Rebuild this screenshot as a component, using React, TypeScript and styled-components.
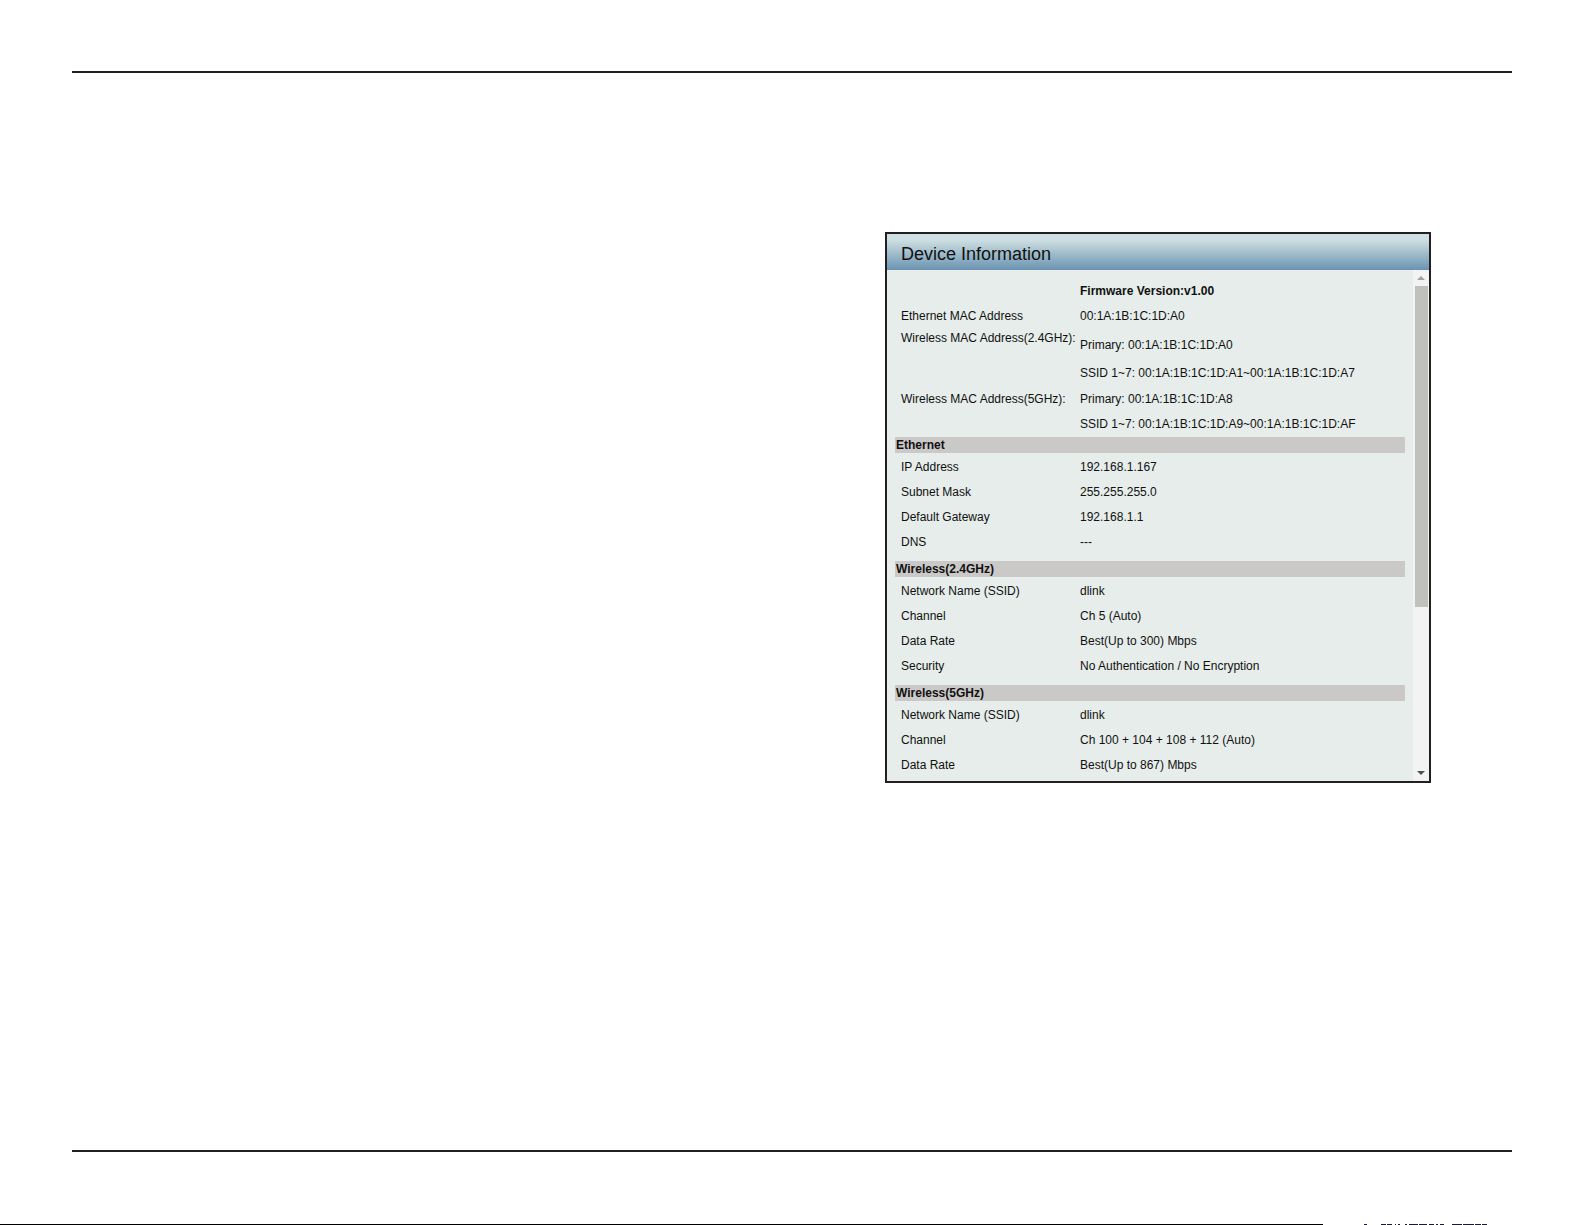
import React from "react";
import styled, { createGlobalStyle } from "styled-components";

const ink = "#231f20";

const GlobalStyle = createGlobalStyle`
  *, *::before, *::after { box-sizing: border-box; }
  body {
    margin: 0;
    background: #fff;
    color: #111;
    font-family: "Liberation Sans", Arial, Helvetica, sans-serif;
    font-size: 12px;
  }
`;

const Page = styled.div`
  min-height: 100vh;
  display: flex;
  flex-direction: column;
  padding-top: 71px;
`;

const Content = styled.main`
  flex: 1;
  margin: 0 73px 72px 72px;
  padding: 159px 81px 24px;
  border-top: 2px solid ${ink};
  border-bottom: 2px solid ${ink};
`;

const Panel = styled.article`
  width: 100%;
  max-width: 546px;
  margin-left: auto;
  border: 2px solid ${ink};
  background: #e6edea;
`;

const PanelTitle = styled.h1`
  margin: 0;
  padding: 4px 14px 0;
  font-size: 18px;
  line-height: 32px;
  font-weight: 400;
  background: linear-gradient(#cfe0e2 15%, #6a93b1);
`;

const PanelBody = styled.div`
  display: flex;
`;

const Details = styled.div`
  flex: 1;
  min-width: 0;
  padding: 9px 8px 3px;
`;

const Section = styled.section`
  & + & {
    margin-top: 6px;
  }
`;

const SectionTitle = styled.h2`
  margin: 0 0 2px;
  padding: 0 1px;
  font-size: 12px;
  line-height: 16px;
  font-weight: 700;
  background: #cbc9c7;
`;

const InfoTable = styled.table`
  width: 100%;
  table-layout: fixed;
  border-collapse: collapse;
`;

const LabelColumn = styled.col`
  width: 185px;
`;

const Label = styled.th<{ $top?: boolean }>`
  padding: ${(p) => (p.$top ? "2px 0 0 6px" : "0 0 0 6px")};
  vertical-align: top;
  text-align: left;
  font-weight: 400;
  line-height: ${(p) => (p.$top ? "14px" : "25px")};
  white-space: nowrap;
`;

const Value = styled.td<{ $loose?: boolean; $strong?: boolean }>`
  padding: ${(p) => (p.$loose ? "2px 0 0" : "0")};
  line-height: ${(p) => (p.$loose ? "28px" : "25px")};
  font-weight: ${(p) => (p.$strong ? 700 : 400)};
`;

const Line = styled.div``;

const ScrollBar = styled.div`
  width: 16px;
  display: flex;
  flex-direction: column;
  background: #f3f3f3;
`;

const ScrollButton = styled.button<{ $dim?: boolean }>`
  height: 16px;
  padding: 0;
  border: 0;
  display: grid;
  place-items: center;
  background: transparent;
  color: ${(p) => (p.$dim ? "#a0a0a0" : "#505050")};
`;

const Track = styled.div`
  flex: 1;
  padding: 0 1px 0 2px;
`;

const Thumb = styled.div`
  height: 67%;
  background: #c0c1bd;
`;

const FootStrip = styled.footer`
  display: flex;
  height: 1px;
`;

const FootRule = styled.div`
  flex: 1;
  background: #000;
`;

const FootMarks = styled.svg`
  display: block;
  flex: none;
`;

type Row = { label: string; values: string[]; loose?: boolean; strong?: boolean };

const device: Row[] = [
  { label: "", values: ["Firmware Version:v1.00"], strong: true },
  { label: "Ethernet MAC Address", values: ["00:1A:1B:1C:1D:A0"] },
  {
    label: "Wireless MAC Address(2.4GHz):",
    values: ["Primary: 00:1A:1B:1C:1D:A0", "SSID 1~7: 00:1A:1B:1C:1D:A1~00:1A:1B:1C:1D:A7"],
    loose: true,
  },
  {
    label: "Wireless MAC Address(5GHz):",
    values: ["Primary: 00:1A:1B:1C:1D:A8", "SSID 1~7: 00:1A:1B:1C:1D:A9~00:1A:1B:1C:1D:AF"],
  },
];

const sections: { title: string; rows: Row[] }[] = [
  {
    title: "Ethernet",
    rows: [
      { label: "IP Address", values: ["192.168.1.167"] },
      { label: "Subnet Mask", values: ["255.255.255.0"] },
      { label: "Default Gateway", values: ["192.168.1.1"] },
      { label: "DNS", values: ["---"] },
    ],
  },
  {
    title: "Wireless(2.4GHz)",
    rows: [
      { label: "Network Name (SSID)", values: ["dlink"] },
      { label: "Channel", values: ["Ch 5 (Auto)"] },
      { label: "Data Rate", values: ["Best(Up to 300) Mbps"] },
      { label: "Security", values: ["No Authentication / No Encryption"] },
    ],
  },
  {
    title: "Wireless(5GHz)",
    rows: [
      { label: "Network Name (SSID)", values: ["dlink"] },
      { label: "Channel", values: ["Ch 100 + 104 + 108 + 112 (Auto)"] },
      { label: "Data Rate", values: ["Best(Up to 867) Mbps"] },
    ],
  },
];

// Start and length of each dark mark at the right end of the foot strip.
const marks = [
  [41, 3], [58, 5], [64, 5], [72, 1], [75, 2], [82, 2], [86, 9], [96, 8],
  [106, 5], [113, 2], [117, 4], [129, 10], [140, 11], [152, 6], [159, 5],
];

function Rows({ rows }: { rows: Row[] }) {
  return (
    <InfoTable>
      <colgroup>
        <LabelColumn />
        <col />
      </colgroup>
      <tbody>
        {rows.map((row) => (
          <tr key={row.label}>
            {row.label ? (
              <Label scope="row" $top={row.loose}>{row.label}</Label>
            ) : (
              <td />
            )}
            <Value $loose={row.loose} $strong={row.strong}>
              {row.values.map((v) => (
                <Line key={v}>{v}</Line>
              ))}
            </Value>
          </tr>
        ))}
      </tbody>
    </InfoTable>
  );
}

export default function App() {
  return (
    <>
      <GlobalStyle />
      <Page>
        <Content>
          <Panel>
            <PanelTitle>Device Information</PanelTitle>
            <PanelBody>
              <Details>
                <Rows rows={device} />
                {sections.map((s) => (
                  <Section key={s.title}>
                    <SectionTitle>{s.title}</SectionTitle>
                    <Rows rows={s.rows} />
                  </Section>
                ))}
              </Details>
              <ScrollBar>
                <ScrollButton type="button" aria-label="Scroll up" $dim>
                  <svg width="8" height="4" viewBox="0 0 8 4">
                    <path d="M4 0 8 4H0Z" fill="currentColor" />
                  </svg>
                </ScrollButton>
                <Track>
                  <Thumb />
                </Track>
                <ScrollButton type="button" aria-label="Scroll down">
                  <svg width="8" height="4" viewBox="0 0 8 4">
                    <path d="M0 0H8L4 4Z" fill="currentColor" />
                  </svg>
                </ScrollButton>
              </ScrollBar>
            </PanelBody>
          </Panel>
        </Content>
        <FootStrip>
          <FootRule />
          <FootMarks width="262" height="1" viewBox="0 0 262 1" aria-hidden="true">
            {marks.map(([x, w]) => (
              <rect key={x} x={x} width={w} height="1" fill="#1a1a30" />
            ))}
          </FootMarks>
        </FootStrip>
      </Page>
    </>
  );
}
